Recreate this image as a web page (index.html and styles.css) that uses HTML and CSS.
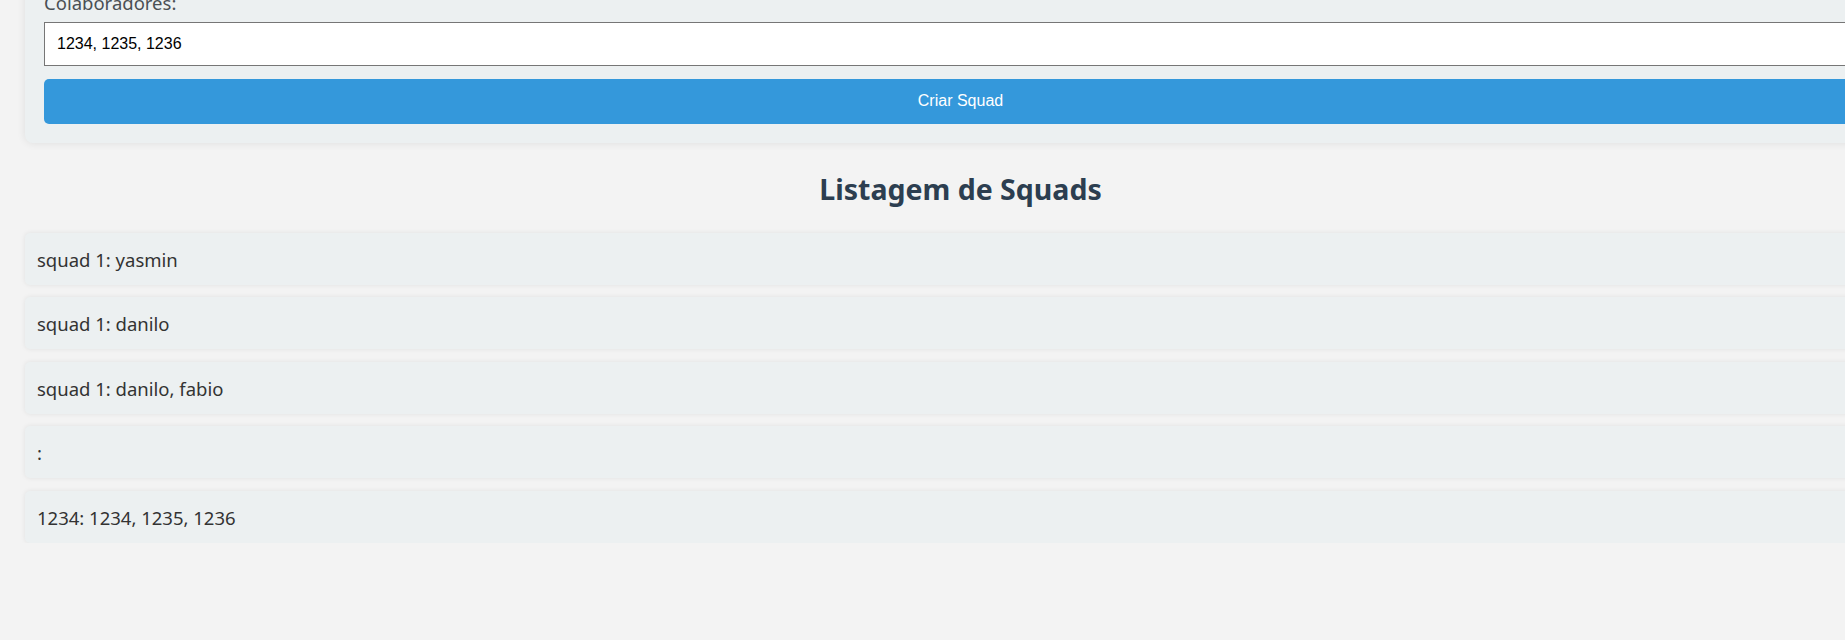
FILE: index.html
```html
<!DOCTYPE html>
<html lang="pt-BR">
<head>
<meta charset="utf-8">
<title>Squads</title>
<link rel="stylesheet" href="styles.css">
</head>
<body>
<main class="app">
  <form class="card">
    <label class="label" for="colab">Colaboradores:</label>
    <input class="field" id="colab" type="text" value="1234, 1235, 1236">
    <button class="btn" type="button">Criar Squad</button>
  </form>
  <h2 class="title">Listagem de Squads</h2>
  <ul class="list">
    <li class="item">squad 1: yasmin</li>
    <li class="item">squad 1: danilo</li>
    <li class="item">squad 1: danilo, fabio</li>
    <li class="item">:</li>
    <li class="item">1234: 1234, 1235, 1236</li>
  </ul>
</main>
</body>
</html>
```

FILE: styles.css
```css
html, body {
  margin: 0;
  padding: 0;
  overflow: hidden;
  background: #f3f3f3;
}

body {
  font-family: "Noto Sans", "Open Sans", sans-serif;
  color: #333;
}

.app {
  width: 1871px;
  margin-left: 25px;
  display: flex;
  flex-direction: column;
}

.card {
  margin-top: -29.5px;
  padding: 19px;
  background: #ecf0f1;
  border-radius: 8px;
  box-shadow: 0 0 8px rgba(0, 0, 0, 0.09);
  display: flex;
  flex-direction: column;
}

.label {
  font-size: 18.5px;
  line-height: 26px;
  color: #4a4f54;
  margin-bottom: 6px;
}

.field {
  box-sizing: border-box;
  height: 44px;
  margin: 0 0 13px;
  padding: 0 12px;
  border: 1px solid #767676;
  border-radius: 0;
  background: #fff;
  font-family: "Liberation Sans", Arial, sans-serif;
  font-size: 16px;
  color: #000;
  outline: none;
}

.btn {
  height: 45px;
  border: none;
  border-radius: 5px;
  background: #3498db;
  color: #fff;
  font-family: "Liberation Sans", Arial, sans-serif;
  font-size: 16px;
  padding: 0;
}

.title {
  margin: 28px 0 26px;
  text-align: center;
  font-size: 28.5px;
  line-height: 36px;
  font-weight: 700;
  color: #2c3e50;
}

.list {
  list-style: none;
  margin: 0;
  padding: 0;
  display: flex;
  flex-direction: column;
  gap: 12.6px;
}

.item {
  box-sizing: border-box;
  height: 52px;
  padding: 14px 12px 12px;
  font-size: 18.5px;
  line-height: 26px;
  color: #333;
  background: #ecf0f1;
  border-radius: 5px;
  box-shadow: 0 0 5px rgba(0, 0, 0, 0.08);
}
```
